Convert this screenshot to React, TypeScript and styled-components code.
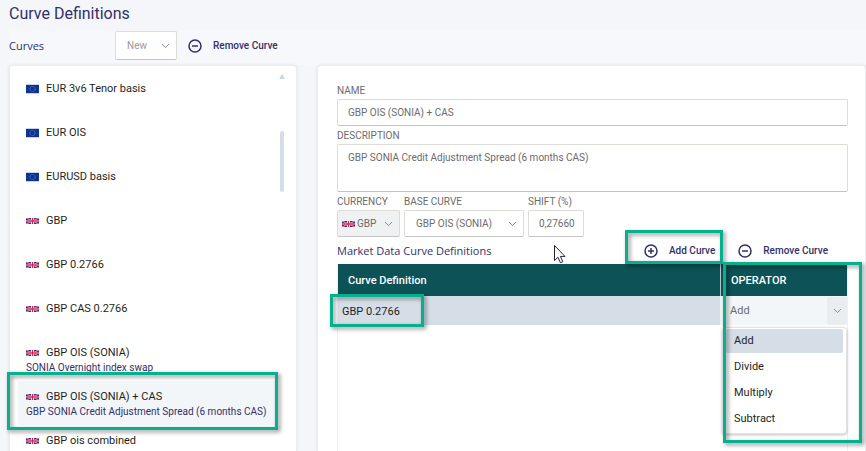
import React, { useState } from "react";
import styled, { createGlobalStyle, css } from "styled-components";

const color = {
  page: "#f4f6f9",
  ink: "#1f1f22",
  navy: "#32306a",
  muted: "#6b6b6d",
  line: "#dddcd6",
  lineDark: "#c4c4c4",
  teal: "#0d5257",
  row: "#d5dee7",
  soft: "#f3f6f9",
  mark: "#06b08f",
};

const GlobalStyle = createGlobalStyle`
  * { box-sizing: border-box; }
  body {
    margin: 0;
    background: ${color.page};
    color: ${color.ink};
    font: 11px/16px Roboto, "Liberation Sans", sans-serif;
    overflow: hidden;
  }
  button, input, select, textarea { font: inherit; color: inherit; }
`;

const Page = styled.div`
  display: flex;
  flex-direction: column;
  height: 100vh;
  padding-left: 9px;
`;

const Title = styled.h1`
  margin: 0;
  height: 31px;
  padding-top: 3px;
  font-size: 16px;
  line-height: 21px;
  font-weight: 400;
  color: ${color.navy};
`;

const Toolbar = styled.div`
  display: flex;
  align-items: center;
  height: 34px;
  padding-bottom: 5px;
  background: #f7f8fb;
`;

const Heading = styled.h2`
  margin: 0;
  font: 400 11px/16px "Open Sans", "Noto Sans", sans-serif;
  color: ${color.navy};
`;

const ToolbarHeading = styled(Heading)`
  width: 106px;
`;

const IconButton = styled.button`
  display: flex;
  align-items: center;
  gap: 10px;
  padding: 0;
  border: 0;
  background: none;
  color: ${color.navy};
  font-size: 10px;
  font-weight: 500;
  white-space: nowrap;
`;

const SelectBox = styled.span<{ $filled?: boolean; $tall?: boolean }>`
  display: flex;
  align-items: center;
  gap: 2px;
  height: ${(p) => (p.$tall ? 29 : 27)}px;
  padding: 0 6px 0 ${(p) => (p.$filled ? 4 : 11)}px;
  border: 1px solid ${color.line};
  border-bottom-color: ${color.lineDark};
  border-radius: 2px;
  background: ${(p) => (p.$filled ? "#f0f1f3" : "#fff")};
  color: ${(p) => (p.$tall ? "#9a9a9a" : color.muted)};
`;

const NewBox = styled(SelectBox)`
  width: 62px;
  margin-right: 10px;
  font-size: 10px;
`;

const Select = styled.select`
  flex: 1;
  min-width: 0;
  padding: 0;
  border: 0;
  outline: 0;
  appearance: none;
  background: transparent;
`;

const Columns = styled.div`
  display: grid;
  grid-template-columns: 288px 1fr;
  gap: 20px;
  flex: 1;
  min-height: 0;
`;

const Card = styled.section`
  border: 1px solid #ebedf1;
  border-bottom: 0;
  border-radius: 4px 4px 0 0;
  background: #fff;
  box-shadow: 0 0 3px rgba(60, 70, 90, 0.14);
  min-height: 0;
`;

const ListCard = styled(Card)`
  display: flex;
  padding: 7px 8px 0;
`;

const List = styled.ul`
  flex: 1;
  margin: 0;
  padding: 0;
  list-style: none;
`;

const Mark = styled.span<{ $inset: string; $width?: number; $height?: number }>`
  position: absolute;
  inset: ${(p) => p.$inset};
  ${(p) => p.$width && css`width: ${p.$width}px;`}
  ${(p) => p.$height && css`height: ${p.$height}px;`}
  border: 3px solid ${color.mark};
  filter: drop-shadow(2px 2px 2px rgba(0, 0, 0, 0.45));
  pointer-events: none;
  z-index: 3;
`;

const ListItem = styled.li`
  position: relative;
`;

const CurveButton = styled.button<{ $active: boolean }>`
  display: flex;
  flex-direction: column;
  justify-content: flex-start;
  width: 100%;
  height: 44px;
  padding: 8px 8px 0;
  border: 0;
  background: ${(p) => (p.$active ? color.soft : "transparent")};
  text-align: left;
`;

const CurveName = styled.span`
  display: flex;
  align-items: center;
  gap: 7px;
`;

const CurveNote = styled.span`
  font-size: 10px;
  line-height: 13px;
  color: ${color.navy};
  white-space: nowrap;
`;

const ScrollRail = styled.div`
  display: flex;
  flex-direction: column;
  align-items: center;
  width: 12px;
  padding-top: 1px;
`;

const ScrollThumb = styled.div`
  width: 4px;
  height: 61px;
  margin-top: 52px;
  border-radius: 2px;
  background: ${color.row};
`;

const Detail = styled(Card)`
  display: flex;
  flex-direction: column;
  padding: 17px 17px 0 19px;
`;

const Field = styled.label`
  display: flex;
  flex-direction: column;
  color: ${color.muted};
  font-size: 10px;
`;

const Caption = styled.span`
  line-height: 15px;
  margin-bottom: 1px;
  white-space: nowrap;
`;

const inputLook = css`
  width: 100%;
  border: 1px solid ${color.line};
  border-bottom-color: ${color.lineDark};
  border-radius: 2px;
  background: #fff;
  outline: 0;
`;

const Input = styled.input`
  ${inputLook}
  height: 27px;
  padding: 0 7px 0 10px;
`;

const TextArea = styled.textarea`
  ${inputLook}
  display: block;
  height: 48px;
  padding: 5px 10px;
  resize: none;
`;

const Stack = styled.div`
  display: flex;
  flex-direction: column;
  gap: 2px;
`;

const FieldRow = styled.div`
  display: grid;
  grid-template-columns: 63px 120px 56px;
  gap: 4px;
`;

const TableBar = styled.div`
  position: relative;
  display: flex;
  align-items: center;
  height: 27px;
`;

const BarActions = styled.div`
  display: flex;
  gap: 22px;
  margin-left: auto;
  padding-right: 20px;
`;

const Relative = styled.div`
  position: relative;
`;

const TableArea = styled.div`
  flex: 1;
  border: solid #eef1f4;
  border-width: 0 1px;
`;

const Table = styled.table`
  width: 100%;
  border-collapse: separate;
  border-spacing: 0;
  table-layout: fixed;
`;

const HeadCell = styled.th<{ $operator?: boolean }>`
  position: relative;
  width: ${(p) => (p.$operator ? "127px" : "auto")};
  height: 32px;
  padding: 2px 10px 0;
  background: ${color.teal};
  color: #fff;
  font-weight: 500;
  text-align: left;
  ${(p) => p.$operator && css`border-left: 1px solid #b5c7cb;`}
`;

const Cell = styled.td<{ $operator?: boolean }>`
  position: relative;
  height: 29px;
  padding: ${(p) => (p.$operator ? "0" : "2px 4px 0")};
  background: ${(p) => (p.$operator ? color.soft : color.row)};
`;

const OperatorButton = styled.button`
  display: flex;
  align-items: center;
  justify-content: space-between;
  width: 100%;
  height: 29px;
  padding: 0 0 0 10px;
  border: 0;
  background: none;
  color: ${color.muted};
  text-align: left;
`;

const ArrowCell = styled.span`
  display: flex;
  align-items: center;
  justify-content: center;
  width: 20px;
  height: 28px;
  border-radius: 3px;
  background: #e9edf0;
`;

const Menu = styled.ul`
  position: absolute;
  top: 31px;
  left: 2px;
  right: 0;
  display: flex;
  flex-direction: column;
  gap: 2px;
  margin: 0;
  padding: 1px 3px 2px;
  list-style: none;
  border: 1px solid #e2e4e6;
  border-radius: 4px;
  background: #fff;
  box-shadow: 0 1px 3px rgba(0, 0, 0, 0.25);
  z-index: 2;
`;

const Option = styled.li<{ $active: boolean }>`
  height: 24px;
  padding: 0 8px;
  line-height: 24px;
  border-radius: 2px;
  background: ${(p) => (p.$active ? color.row : "transparent")};
`;

const Pointer = styled.svg`
  position: absolute;
  left: 216px;
  top: 7px;
`;

const Chevron = () => (
  <svg width="9" height="6" viewBox="0 0 9 6" fill="none" stroke="#8b8b8b" aria-hidden="true">
    <path d="M1 1l3.5 3.6L8 1" />
  </svg>
);

const CircleIcon = ({ plus = false }: { plus?: boolean }) => (
  <svg width="16" height="16" viewBox="0 0 16 16" fill="none" stroke={color.navy} strokeWidth="1.5" aria-hidden="true">
    <circle cx="8" cy="8" r="6" />
    <path d={plus ? "M5 8h6M8 5v6" : "M5 8h6"} />
  </svg>
);

const Flag = ({ code }: { code: "EUR" | "GBP" }) =>
  code === "EUR" ? (
    <svg width="13" height="10" viewBox="0 0 13 10" aria-hidden="true">
      <path fill="#c3d5ec" d="M0 0h13v10H0z" />
      <path fill="#0a339b" d="M0 1h13v8H0z" />
      <circle cx="6.5" cy="5" r="2.6" fill="none" stroke="#a5a04e" strokeWidth="0.8" strokeDasharray="0.7 0.66" />
    </svg>
  ) : (
    <svg width="13" height="6" viewBox="0 0 13 6" aria-hidden="true">
      <path fill="#1f3590" d="M0 0h13v6H0z" />
      <path stroke="#eebccb" strokeWidth="1.1" d="M0 0l13 6M13 0L0 6" />
      <path stroke="#e0405c" strokeWidth="0.5" d="M0 0l13 6M13 0L0 6" />
      <path fill="#f3d3dd" d="M5 0h3v6H5z" />
      <path fill="#e25c78" d="M0 2h13v2H0z" />
      <path fill="#d8203f" d="M6 0h1v6H6z" />
    </svg>
  );

type Curve = { code: "EUR" | "GBP"; name: string; note?: string };

const curves: Curve[] = [
  { code: "EUR", name: "EUR 3v6 Tenor basis" },
  { code: "EUR", name: "EUR OIS" },
  { code: "EUR", name: "EURUSD basis" },
  { code: "GBP", name: "GBP" },
  { code: "GBP", name: "GBP 0.2766" },
  { code: "GBP", name: "GBP CAS 0.2766" },
  { code: "GBP", name: "GBP OIS (SONIA)", note: "SONIA Overnight index swap" },
  { code: "GBP", name: "GBP OIS (SONIA) + CAS", note: "GBP SONIA Credit Adjustment Spread (6 months CAS)" },
  { code: "GBP", name: "GBP ois combined" },
];

const operators = ["Add", "Divide", "Multiply", "Subtract"];

export default function App() {
  const [selected, setSelected] = useState(7);
  const [operator, setOperator] = useState("Add");
  const [open, setOpen] = useState(true);

  return (
    <Page>
      <GlobalStyle />
      <Title>Curve Definitions</Title>
      <Toolbar>
        <ToolbarHeading>Curves</ToolbarHeading>
        <NewBox $tall>
          <Select aria-label="New curve"><option>New</option></Select>
          <Chevron />
        </NewBox>
        <IconButton type="button"><CircleIcon />Remove Curve</IconButton>
      </Toolbar>
      <Columns>
        <ListCard aria-label="Curves">
          <List>
            {curves.map((curve, i) => (
              <ListItem key={curve.name}>
                <CurveButton type="button" $active={i === selected} onClick={() => setSelected(i)}>
                  <CurveName><Flag code={curve.code} />{curve.name}</CurveName>
                  {curve.note && <CurveNote>{curve.note}</CurveNote>}
                </CurveButton>
                {i === selected && <Mark $inset="-9px -2px -5px -11px" />}
              </ListItem>
            ))}
          </List>
          <ScrollRail>
            <svg width="6" height="5" viewBox="0 0 6 5" aria-hidden="true">
              <path d="M3 0l3 5H0z" fill="#ccd6e0" />
            </svg>
            <ScrollThumb />
          </ScrollRail>
        </ListCard>
        <Detail aria-label="Curve details">
          <Stack>
            <Field>
              <Caption>NAME</Caption>
              <Input defaultValue="GBP OIS (SONIA) + CAS" />
            </Field>
            <Field>
              <Caption>DESCRIPTION</Caption>
              <TextArea defaultValue="GBP SONIA Credit Adjustment Spread (6 months CAS)" />
            </Field>
            <FieldRow>
              <Field>
                <Caption>CURRENCY</Caption>
                <SelectBox $filled>
                  <Flag code="GBP" />
                  <Select><option>GBP</option></Select>
                  <Chevron />
                </SelectBox>
              </Field>
              <Field>
                <Caption>BASE CURVE</Caption>
                <SelectBox>
                  <Select><option>GBP OIS (SONIA)</option></Select>
                  <Chevron />
                </SelectBox>
              </Field>
              <Field>
                <Caption>SHIFT (%)</Caption>
                <Input defaultValue="0,27660" />
              </Field>
            </FieldRow>
          </Stack>
          <TableBar>
            <Heading>Market Data Curve Definitions</Heading>
            <BarActions>
              <Relative>
                <IconButton type="button"><CircleIcon plus />Add Curve</IconButton>
                <Mark $inset="-13px -8px -5px -18px" />
              </Relative>
              <IconButton type="button"><CircleIcon />Remove Curve</IconButton>
            </BarActions>
            <Pointer width="13" height="20" viewBox="0 0 13 20" aria-hidden="true">
              <path d="M1.5 1.5v15l3.5-3.2 2.4 5.4 2.4-1-2.4-5.3h4.6z" fill="#fff" stroke="#222433" />
            </Pointer>
          </TableBar>
          <TableArea>
            <Table>
              <thead>
                <tr>
                  <HeadCell scope="col">Curve Definition</HeadCell>
                  <HeadCell scope="col" $operator>
                    OPERATOR
                    <Mark $inset="-2px -15px auto 2px" $height={181} />
                  </HeadCell>
                </tr>
              </thead>
              <tbody>
                <tr>
                  <Cell>
                    GBP 0.2766
                    <Mark $inset="-2px auto -2px -8px" $width={94} />
                  </Cell>
                  <Cell $operator>
                    <OperatorButton
                      type="button"
                      aria-haspopup="listbox"
                      aria-expanded={open}
                      onClick={() => setOpen(!open)}
                    >
                      {operator}
                      <ArrowCell><Chevron /></ArrowCell>
                    </OperatorButton>
                    {open && (
                      <Menu role="listbox" aria-label="Operator">
                        {operators.map((name) => (
                          <Option
                            key={name}
                            role="option"
                            aria-selected={name === operator}
                            $active={name === operator}
                            onClick={() => setOperator(name)}
                          >
                            {name}
                          </Option>
                        ))}
                      </Menu>
                    )}
                  </Cell>
                </tr>
              </tbody>
            </Table>
          </TableArea>
        </Detail>
      </Columns>
    </Page>
  );
}
